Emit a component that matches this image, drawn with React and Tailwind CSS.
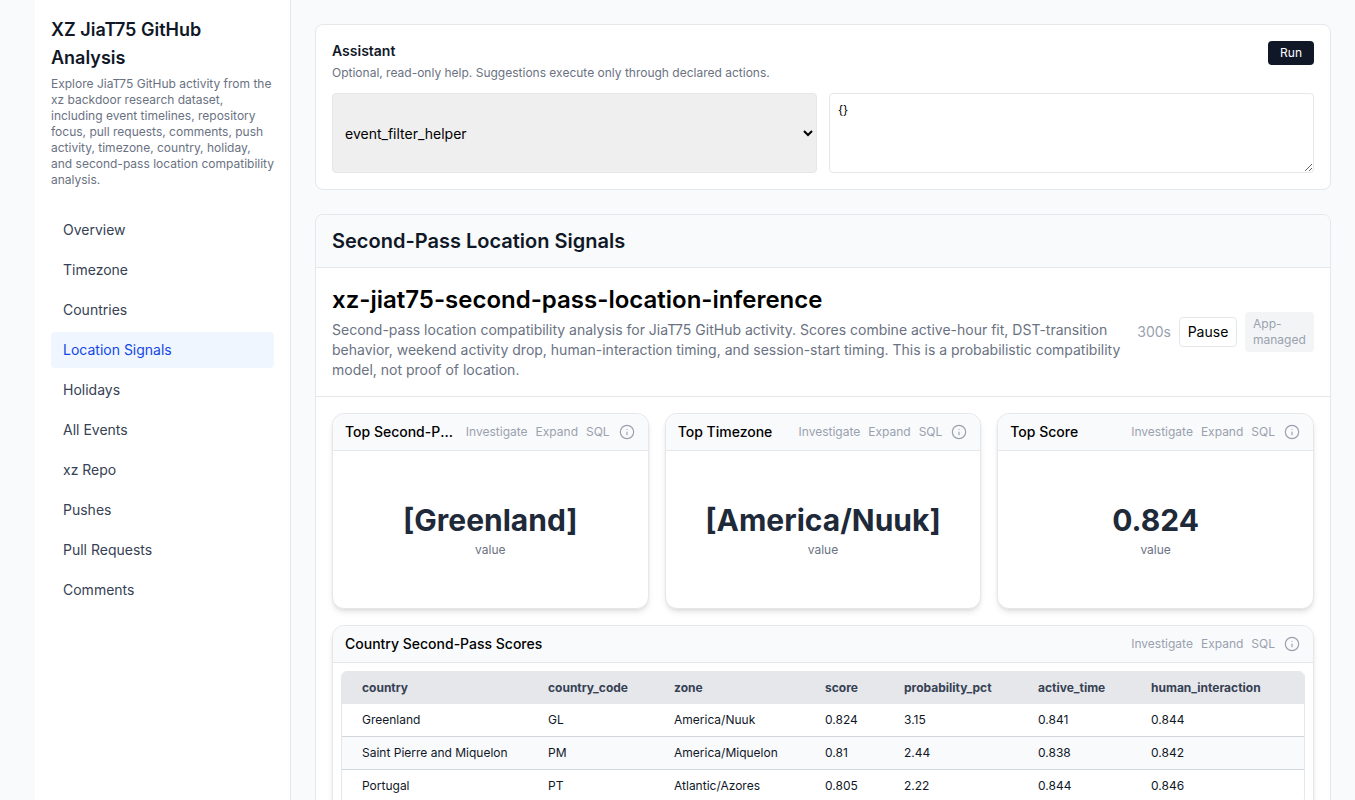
import { Info } from "lucide-react";

const nav = ["Overview", "Timezone", "Countries", "Location Signals", "Holidays", "All Events", "xz Repo", "Pushes", "Pull Requests", "Comments"];

const columns = [
  { key: "country", width: "w-[206px]" },
  { key: "country_code", width: "w-[126px]" },
  { key: "zone", width: "w-[151px]" },
  { key: "score", width: "w-[79px]" },
  { key: "probability_pct", width: "w-[134px]" },
  { key: "active_time", width: "w-[113px]" },
  { key: "human_interaction", width: "w-[153px]" },
];

const rows = [
  ["Greenland", "GL", "America/Nuuk", "0.824", "3.15", "0.841", "0.844"],
  ["Saint Pierre and Miquelon", "PM", "America/Miquelon", "0.81", "2.44", "0.838", "0.842"],
  ["Portugal", "PT", "Atlantic/Azores", "0.805", "2.22", "0.844", "0.846"],
];

function PanelHeader({ title }) {
  return (
    <div className="flex h-[37px] shrink-0 items-center justify-between gap-3 rounded-t-xl border-b border-gray-200 bg-gray-50 px-3">
      <h3 className="min-w-0 truncate text-sm font-medium text-black">{title}</h3>
      <div className="flex shrink-0 items-center gap-2 text-xs text-gray-400">
        <span>Investigate</span>
        <span>Expand</span>
        <span>SQL</span>
        <Info className="ml-px mr-px h-4 w-4" strokeWidth={1.75} />
      </div>
    </div>
  );
}

function StatPanel({ title, value }) {
  return (
    <div className="flex h-[196px] flex-col rounded-xl border border-gray-200 bg-white shadow-md">
      <PanelHeader title={title} />
      <div className="flex flex-1 flex-col items-center justify-center">
        <div className="text-3xl font-bold leading-9 text-gray-800">{value}</div>
        <div className="mt-1 text-xs text-gray-500">value</div>
      </div>
    </div>
  );
}

export default function App() {
  return (
    <div className="flex h-screen overflow-hidden bg-gray-50 pl-[35px] font-['Inter',sans-serif]">
      <aside className="w-[256px] shrink-0 border-r border-gray-200 bg-white px-4 py-4">
        <h1 className="text-lg font-semibold leading-7 text-gray-900">XZ JiaT75 GitHub Analysis</h1>
        <p className="mt-1 text-xs text-gray-500">
          Explore JiaT75 GitHub activity from the xz backdoor research dataset, including event timelines, repository focus, pull requests, comments, push activity, timezone, country, holiday, and second-pass location compatibility analysis.
        </p>
        <nav className="mt-6 flex flex-col gap-1">
          {nav.map((item) => (
            <a
              key={item}
              className={
                item === "Location Signals"
                  ? "rounded bg-blue-50 px-3 py-2 text-sm text-blue-700"
                  : "rounded px-3 py-2 text-sm text-gray-700"
              }
            >
              {item}
            </a>
          ))}
        </nav>
      </aside>

      <main className="min-w-0 flex-1 p-6">
        <section className="rounded-lg border border-gray-200 bg-white p-4">
          <div className="flex items-start justify-between">
            <div>
              <h2 className="text-sm font-semibold text-gray-900">Assistant</h2>
              <p className="mt-1 text-xs text-gray-500">Optional, read-only help. Suggestions execute only through declared actions.</p>
            </div>
            <button className="rounded bg-gray-900 px-3 py-1 text-xs text-white">Run</button>
          </div>
          <div className="mt-3 grid grid-cols-2 gap-3">
            <select className="h-20 rounded border border-gray-200 bg-[#efefef] px-2 text-sm text-black">
              <option>event_filter_helper</option>
            </select>
            <textarea className="h-20 rounded border border-gray-200 px-2 py-2 text-xs text-black" defaultValue="{}" />
          </div>
        </section>

        <section className="mt-6 rounded-lg border border-gray-200 bg-white">
          <div className="rounded-t-lg border-b border-gray-200 bg-gray-50 px-4 py-3">
            <h2 className="text-xl font-semibold text-gray-900">Second-Pass Location Signals</h2>
          </div>

          <div className="flex items-center gap-4 border-b border-gray-200 px-4 py-4">
            <div className="min-w-0 flex-1">
              <h2 className="text-2xl font-semibold text-black">xz-jiat75-second-pass-location-inference</h2>
              <p className="mt-1 text-sm text-gray-500">
                Second-pass location compatibility analysis for JiaT75 GitHub activity. Scores combine active-hour fit, DST-transition behavior, weekend activity drop, human-interaction timing, and session-start timing. This is a probabilistic compatibility model, not proof of location.
              </p>
            </div>
            <div className="flex shrink-0 items-center gap-2">
              <span className="text-sm text-gray-400">300s</span>
              <button className="w-[58px] rounded border border-gray-200 py-1 text-sm text-black">Pause</button>
              <span className="w-[69px] rounded bg-gray-100 px-2 py-1 text-xs leading-4 text-gray-400">App-managed</span>
            </div>
          </div>

          <div className="p-4">
            <div className="grid grid-cols-3 gap-4">
              <StatPanel title="Top Second-Pass Country" value="[Greenland]" />
              <StatPanel title="Top Timezone" value="[America/Nuuk]" />
              <StatPanel title="Top Score" value="0.824" />
            </div>

            <div className="mt-4 rounded-xl border border-gray-200 bg-white shadow-md">
              <PanelHeader title="Country Second-Pass Scores" />
              <div className="p-2">
                <div className="overflow-hidden rounded-md border border-gray-200">
                  <table className="w-full table-fixed border-separate border-spacing-0 text-left text-xs">
                    <thead>
                      <tr className="h-[32px] bg-gray-200 text-gray-700">
                        {columns.map((col, i) => (
                          <th key={col.key} className={`${col.width} font-bold ${i === 0 ? "pl-5" : ""}`}>
                            {col.key}
                          </th>
                        ))}
                      </tr>
                    </thead>
                    <tbody>
                      {rows.map((row, r) => (
                        <tr key={row[0]} className={r % 2 === 1 ? "h-[33px] bg-gray-50 text-gray-900" : "h-[33px] text-gray-900"}>
                          {row.map((cell, i) => (
                            <td key={i} className={i === 0 ? "border-b border-gray-300 pl-5" : "border-b border-gray-300"}>{cell}</td>
                          ))}
                        </tr>
                      ))}
                    </tbody>
                  </table>
                </div>
              </div>
            </div>
          </div>
        </section>
      </main>
    </div>
  );
}
